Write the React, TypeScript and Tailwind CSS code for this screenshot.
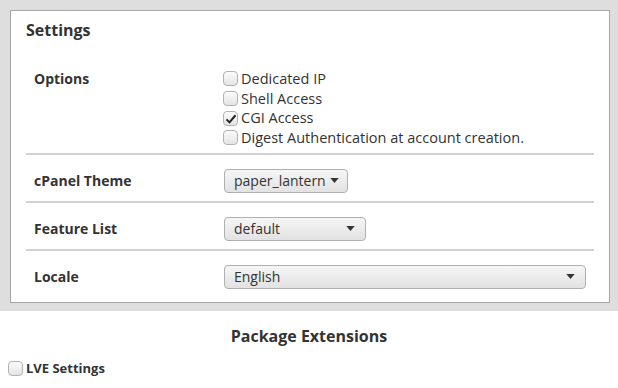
import React from 'react'

function Box({ checked }: { checked?: boolean }) {
  return (
    <span className="relative inline-block w-[15px] h-[15px] shrink-0 rounded-[4px] border border-[#b3b3b3] bg-gradient-to-b from-[#fbfbfb] to-[#e4e4e4]">
      {checked && (
        <svg viewBox="0 0 16 16" className="absolute left-[1px] top-[1px] w-[12px] h-[12px]">
          <path d="M2 8.5 L6 12.5 L14 3" fill="none" stroke="#222" strokeWidth="2.6" />
        </svg>
      )}
    </span>
  )
}

function Select({ value, width }: { value: string; width: string }) {
  return (
    <div
      className={`flex items-center justify-between h-[24px] pl-[9px] rounded-[4px] border border-[#b0b0b0] bg-gradient-to-b from-[#f6f6f6] to-[#e2e2e2] text-[14px] text-[#333] ${width}`}
    >
      <span className="whitespace-nowrap">{value}</span>
      <svg viewBox="0 0 10 6" className="shrink-0 w-[9px] h-[5px] ml-[4px]">
        <path d="M0 0 H10 L5 6 Z" fill="#333" />
      </svg>
    </div>
  )
}

export default function App() {
  const options = [
    { label: 'Dedicated IP', checked: false },
    { label: 'Shell Access', checked: false },
    { label: 'CGI Access', checked: true },
    { label: 'Digest Authentication at account creation.', checked: false },
  ]

  return (
    <div className="w-[618px] h-[388px] bg-white text-[#333]" style={{ fontFamily: '"Open Sans", sans-serif' }}>
      <div className="bg-[#dedede] p-[10px] pr-[8px] pb-[8px]">
        <div className="bg-white border border-[#a6a6a6] px-[15px] pt-[9px] pb-[5px]">
          <h2 className="text-[16px] font-bold leading-[20px]">Settings</h2>

          {/* Options */}
          <div className="flex mt-[29px] pb-[5px] border-b-2 border-[#d2d2d2]">
            <div className="w-[197px] pl-[8px] text-[14px] font-bold leading-[20px]">Options</div>
            <div className="flex flex-col">
              {options.map((o, i) => (
                <label key={i} className="flex items-center gap-[3px] text-[14.5px] leading-[19.7px]">
                  <Box checked={o.checked} />
                  <span>{o.label}</span>
                </label>
              ))}
            </div>
          </div>

          {/* Select rows */}
          {[
            { label: 'cPanel Theme', value: 'paper_lantern', width: 'w-fit pr-[8px]' },
            { label: 'Feature List', value: 'default', width: 'w-[142px] pr-[10px]' },
            { label: 'Locale', value: 'English', width: 'w-[362px] pr-[10px]' },
          ].map((r, i, arr) => (
            <div
              key={i}
              className={`flex items-center pt-[14px] pb-[8px] ${i < arr.length - 1 ? 'border-b-2 border-[#d2d2d2]' : ''}`}
            >
              <div className="w-[198px] pl-[8px] text-[14px] font-bold">{r.label}</div>
              <Select value={r.value} width={r.width} />
            </div>
          ))}
        </div>
      </div>

      <h2 className="text-center text-[16px] font-bold mt-[13px] leading-[24px]">Package Extensions</h2>
      <label className="flex items-center gap-[3px] ml-[8px] mt-[11px] text-[13px] font-bold">
        <Box />
        <span>LVE Settings</span>
      </label>
    </div>
  )
}
